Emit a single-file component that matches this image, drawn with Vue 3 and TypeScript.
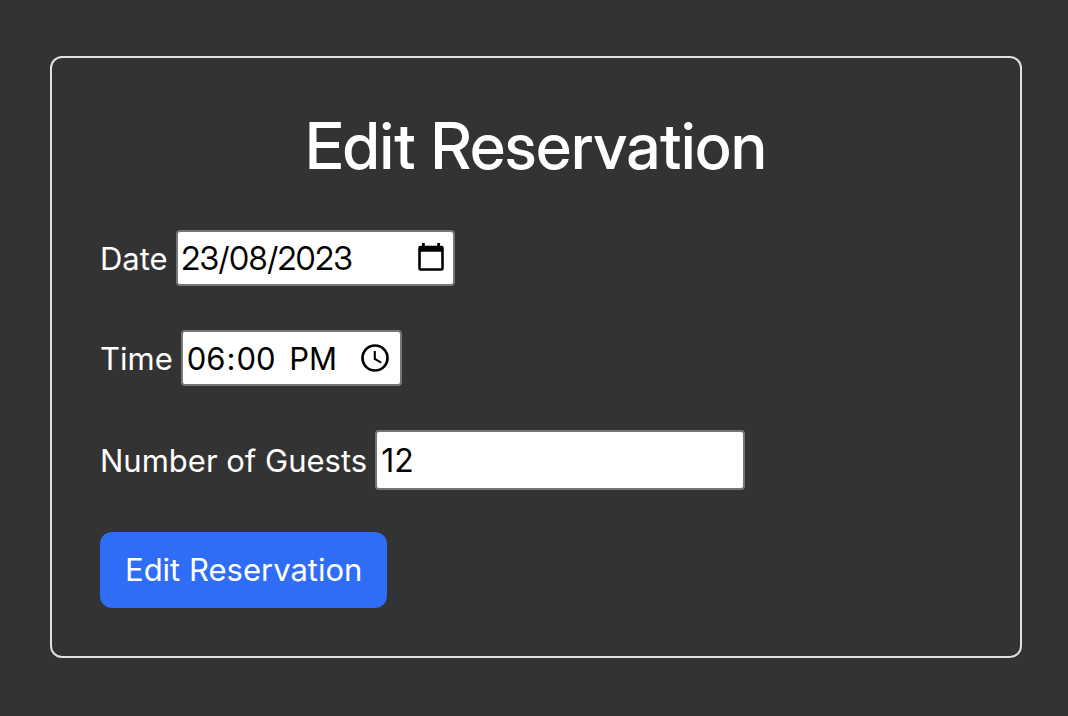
<script setup lang="ts">
import { ref } from 'vue'

const date = ref('23/08/2023')
const time = ref('18:00')
const guests = ref(12)
</script>

<template>
  <main class="page">
    <form class="card" @submit.prevent>
      <h1 class="title">Edit Reservation</h1>
      <div class="row">
        <label for="date">Date</label>
        <div class="field date">
          <input id="date" v-model="date" type="text" />
          <svg class="icon" viewBox="0 0 28 30" aria-hidden="true">
            <path fill="#000" fill-rule="evenodd" d="M5 0h2.800v2.700h12.400V0H23v2.700h1.500a2.300 2.300 0 0 1 2.300 2.300v20.500a2.300 2.300 0 0 1-2.300 2.300h-21a2.300 2.300 0 0 1-2.300-2.300V5a2.300 2.300 0 0 1 2.300-2.300H5zM3.800 8.800v16.500h20.400V8.800z" />
          </svg>
        </div>
      </div>
      <div class="row">
        <label for="time">Time</label>
        <div class="field time">
          <input id="time" v-model="time" type="time" />
          <svg class="icon" viewBox="0 0 28 30" fill="none" stroke="#000" aria-hidden="true">
            <circle cx="14" cy="15" r="12.500" stroke-width="2.700" />
            <path d="M13.800 8v8l6.400 3.600" stroke-width="2.100" />
          </svg>
        </div>
      </div>
      <div class="row last">
        <label for="guests">Number of Guests</label>
        <div class="field guests">
          <input id="guests" v-model="guests" type="number" />
        </div>
      </div>
      <button class="submit" type="submit">Edit Reservation</button>
    </form>
  </main>
</template>

<style>
body {
  margin: 0;
  background: #333;
}
</style>

<style scoped>
.page {
  box-sizing: border-box;
  min-height: 100vh;
  padding: 56px 46px 58px 50px;
  background: #333;
  color: #fff;
  font-family: Inter, "Liberation Sans", sans-serif;
  font-size: 31px;
}
.card {
  display: flex;
  flex-direction: column;
  align-items: flex-start;
  padding: 48px;
  border: 2px solid #dee2e6;
  border-radius: 12px;
}
.title {
  align-self: stretch;
  margin: 0 0 44px;
  font-family: "Inter Display", Inter, "Liberation Sans", sans-serif;
  font-size: 64px;
  font-weight: 500;
  line-height: 80px;
  text-align: center;
}
.row {
  display: flex;
  align-items: center;
  gap: 8px;
  margin-bottom: 44px;
}
.row.last {
  margin-bottom: 42px;
}
.field {
  box-sizing: border-box;
  display: flex;
  align-items: center;
  height: 56px;
  padding: 0 8px 0 4px;
  border: 2px solid #767676;
  border-radius: 4px;
  background: #fff;
}
.field input {
  flex: 1;
  min-width: 0;
  padding: 0;
  border: 0;
  outline: 0;
  background: transparent;
  color: #000;
  font: inherit;
}
.field input::-webkit-calendar-picker-indicator {
  display: none;
}
.field input::-webkit-datetime-edit-ampm-field {
  margin-left: 6px;
}
.date {
  width: 279px;
  font-family: "Inter Display", Inter, "Liberation Sans", sans-serif;
  font-size: 32px;
}
.time {
  width: 221px;
  padding: 0 11px 0 3px;
}
.guests {
  width: 370px;
  height: 60px;
  font-size: 32px;
}
.icon {
  flex: none;
  width: 28px;
  height: 30px;
}
.submit {
  padding: 14px 25px;
  border: 0;
  border-radius: 12px;
  background: #2f6df6;
  color: #fff;
  font: inherit;
  line-height: 48px;
}
</style>
